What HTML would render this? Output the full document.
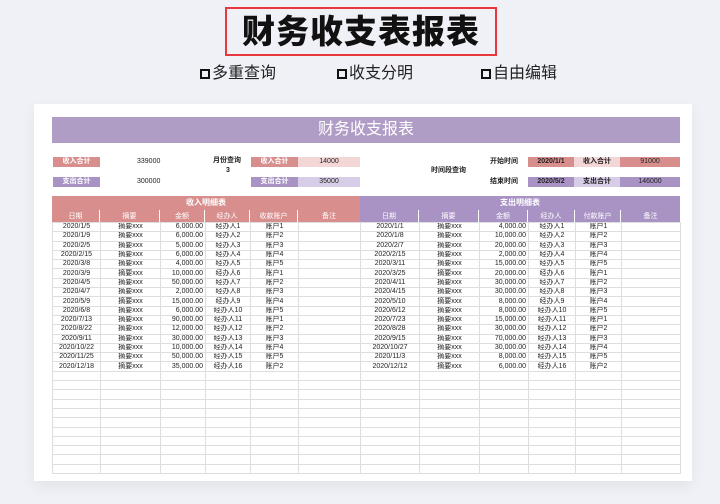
<!DOCTYPE html>
<html><head><meta charset="utf-8">
<style>
*{margin:0;padding:0;box-sizing:border-box}
body{width:720px;height:504px;background:#f0f1f6;position:relative;overflow:hidden;font-family:"Liberation Sans","Noto Sans CJK SC",sans-serif;color:#222}
.abs{position:absolute}
#redbox{left:225px;top:7px;width:272px;height:49px;border:2px solid #e8383d}
#title{left:225px;top:7px;width:272px;text-align:center;font-size:33px;font-weight:900;line-height:49px;letter-spacing:1px;color:#111}
.sub{top:64px;font-size:16px;line-height:20px;color:#222}
.sub i{display:inline-block;width:10px;height:10px;border:2px solid #111;margin-right:2px;vertical-align:-1px}
#card{left:34px;top:104px;width:658px;height:377px;background:#fff;box-shadow:0 6px 14px rgba(0,0,0,0.06)}
#bar{left:52px;top:117px;width:628px;height:26px;background:#b09dc6;color:#fff;font-size:16px;line-height:26px;text-align:center}
.lbl{height:10px;font-size:7px;line-height:10px;text-align:center;color:#fff;font-weight:bold}
.pk{background:#d98e8e}.pu{background:#a993c4}.lpk{background:#f3d6d6;color:#222;font-weight:normal}.lpu{background:#d8cde6;color:#222;font-weight:normal}
.t{font-size:7px;line-height:10px;color:#222}
.hdr{top:196px;height:14px;color:#fff;font-size:8px;font-weight:bold;text-align:center;line-height:14px}
.ch{top:210px;height:13px;display:flex}
.ch div{color:#fff;font-size:7px;line-height:13px;text-align:center;border-right:1px solid #fff}
table{position:absolute;left:52px;top:222px;width:628px;border-collapse:collapse;table-layout:fixed}
td{border:1px solid #dedede;height:9.3px;font-size:7px;line-height:8px;padding:0 2px;text-align:center;white-space:nowrap;overflow:hidden}
td.r{text-align:right}
</style></head><body>
<div class="abs" id="redbox"></div>
<div class="abs" id="title">财务收支表报表</div>
<div class="abs sub" style="left:200px"><i></i>多重查询</div>
<div class="abs sub" style="left:337px"><i></i>收支分明</div>
<div class="abs sub" style="left:481px"><i></i>自由编辑</div>
<div class="abs" id="card"></div>
<div class="abs" id="bar">财务收支报表</div>

<div class="abs lbl pk" style="left:53px;top:157px;width:47px">收入合计</div>
<div class="abs t" style="left:137px;top:157px">339000</div>
<div class="abs lbl pu" style="left:53px;top:177px;width:47px">支出合计</div>
<div class="abs t" style="left:137px;top:177px">300000</div>
<div class="abs t" style="left:213px;top:156px;font-weight:bold">月份查询</div>
<div class="abs t" style="left:226px;top:166px;font-weight:bold">3</div>
<div class="abs lbl pk" style="left:251px;top:157px;width:47px">收入合计</div>
<div class="abs lbl lpk" style="left:298px;top:157px;width:62px">14000</div>
<div class="abs lbl pu" style="left:251px;top:177px;width:47px">支出合计</div>
<div class="abs lbl lpu" style="left:298px;top:177px;width:62px">35000</div>
<div class="abs t" style="left:431px;top:166px;font-weight:bold">时间段查询</div>
<div class="abs t" style="left:490px;top:157px;font-weight:bold">开始时间</div>
<div class="abs t" style="left:490px;top:177px;font-weight:bold">结束时间</div>
<div class="abs lbl pk" style="left:528px;top:157px;width:46px;color:#222">2020/1/1</div>
<div class="abs lbl lpk" style="left:574px;top:157px;width:46px;font-weight:bold">收入合计</div>
<div class="abs lbl pk" style="left:620px;top:157px;width:60px;color:#222;font-weight:normal">91000</div>
<div class="abs lbl pu" style="left:528px;top:177px;width:46px;color:#222">2020/5/2</div>
<div class="abs lbl lpu" style="left:574px;top:177px;width:46px;font-weight:bold">支出合计</div>
<div class="abs lbl pu" style="left:620px;top:177px;width:60px;color:#222;font-weight:normal">146000</div>

<div class="abs hdr pk" style="left:52px;width:308px">收入明细表</div>
<div class="abs hdr pu" style="left:360px;width:320px">支出明细表</div>
<div class="abs ch pk" style="left:52px;width:308px">
<div style="width:48px">日期</div><div style="width:60px">摘要</div><div style="width:45px">金额</div><div style="width:45px">经办人</div><div style="width:48px">收款账户</div><div style="width:62px;border:0">备注</div></div>
<div class="abs ch pu" style="left:360px;width:320px">
<div style="width:59px">日期</div><div style="width:60px">摘要</div><div style="width:49px">金额</div><div style="width:47px">经办人</div><div style="width:46px">付款账户</div><div style="width:59px;border:0">备注</div></div>

<table>
<colgroup><col style="width:48px"><col style="width:60px"><col style="width:45px"><col style="width:45px"><col style="width:48px"><col style="width:62px"><col style="width:59px"><col style="width:60px"><col style="width:49px"><col style="width:47px"><col style="width:46px"><col style="width:59px"></colgroup>
<tr><td>2020/1/5</td><td>摘要xxx</td><td class="r">6,000.00</td><td>经办人1</td><td>账户1</td><td></td><td>2020/1/1</td><td>摘要xxx</td><td class="r">4,000.00</td><td>经办人1</td><td>账户1</td><td></td></tr>
<tr><td>2020/1/9</td><td>摘要xxx</td><td class="r">6,000.00</td><td>经办人2</td><td>账户2</td><td></td><td>2020/1/8</td><td>摘要xxx</td><td class="r">10,000.00</td><td>经办人2</td><td>账户2</td><td></td></tr>
<tr><td>2020/2/5</td><td>摘要xxx</td><td class="r">5,000.00</td><td>经办人3</td><td>账户3</td><td></td><td>2020/2/7</td><td>摘要xxx</td><td class="r">20,000.00</td><td>经办人3</td><td>账户3</td><td></td></tr>
<tr><td>2020/2/15</td><td>摘要xxx</td><td class="r">6,000.00</td><td>经办人4</td><td>账户4</td><td></td><td>2020/2/15</td><td>摘要xxx</td><td class="r">2,000.00</td><td>经办人4</td><td>账户4</td><td></td></tr>
<tr><td>2020/3/8</td><td>摘要xxx</td><td class="r">4,000.00</td><td>经办人5</td><td>账户5</td><td></td><td>2020/3/11</td><td>摘要xxx</td><td class="r">15,000.00</td><td>经办人5</td><td>账户5</td><td></td></tr>
<tr><td>2020/3/9</td><td>摘要xxx</td><td class="r">10,000.00</td><td>经办人6</td><td>账户1</td><td></td><td>2020/3/25</td><td>摘要xxx</td><td class="r">20,000.00</td><td>经办人6</td><td>账户1</td><td></td></tr>
<tr><td>2020/4/5</td><td>摘要xxx</td><td class="r">50,000.00</td><td>经办人7</td><td>账户2</td><td></td><td>2020/4/11</td><td>摘要xxx</td><td class="r">30,000.00</td><td>经办人7</td><td>账户2</td><td></td></tr>
<tr><td>2020/4/7</td><td>摘要xxx</td><td class="r">2,000.00</td><td>经办人8</td><td>账户3</td><td></td><td>2020/4/15</td><td>摘要xxx</td><td class="r">30,000.00</td><td>经办人8</td><td>账户3</td><td></td></tr>
<tr><td>2020/5/9</td><td>摘要xxx</td><td class="r">15,000.00</td><td>经办人9</td><td>账户4</td><td></td><td>2020/5/10</td><td>摘要xxx</td><td class="r">8,000.00</td><td>经办人9</td><td>账户4</td><td></td></tr>
<tr><td>2020/6/8</td><td>摘要xxx</td><td class="r">6,000.00</td><td>经办人10</td><td>账户5</td><td></td><td>2020/6/12</td><td>摘要xxx</td><td class="r">8,000.00</td><td>经办人10</td><td>账户5</td><td></td></tr>
<tr><td>2020/7/13</td><td>摘要xxx</td><td class="r">90,000.00</td><td>经办人11</td><td>账户1</td><td></td><td>2020/7/23</td><td>摘要xxx</td><td class="r">15,000.00</td><td>经办人11</td><td>账户1</td><td></td></tr>
<tr><td>2020/8/22</td><td>摘要xxx</td><td class="r">12,000.00</td><td>经办人12</td><td>账户2</td><td></td><td>2020/8/28</td><td>摘要xxx</td><td class="r">30,000.00</td><td>经办人12</td><td>账户2</td><td></td></tr>
<tr><td>2020/9/11</td><td>摘要xxx</td><td class="r">30,000.00</td><td>经办人13</td><td>账户3</td><td></td><td>2020/9/15</td><td>摘要xxx</td><td class="r">70,000.00</td><td>经办人13</td><td>账户3</td><td></td></tr>
<tr><td>2020/10/22</td><td>摘要xxx</td><td class="r">10,000.00</td><td>经办人14</td><td>账户4</td><td></td><td>2020/10/27</td><td>摘要xxx</td><td class="r">30,000.00</td><td>经办人14</td><td>账户4</td><td></td></tr>
<tr><td>2020/11/25</td><td>摘要xxx</td><td class="r">50,000.00</td><td>经办人15</td><td>账户5</td><td></td><td>2020/11/3</td><td>摘要xxx</td><td class="r">8,000.00</td><td>经办人15</td><td>账户5</td><td></td></tr>
<tr><td>2020/12/18</td><td>摘要xxx</td><td class="r">35,000.00</td><td>经办人16</td><td>账户2</td><td></td><td>2020/12/12</td><td>摘要xxx</td><td class="r">6,000.00</td><td>经办人16</td><td>账户2</td><td></td></tr>
<tr><td></td><td></td><td></td><td></td><td></td><td></td><td></td><td></td><td></td><td></td><td></td><td></td></tr>
<tr><td></td><td></td><td></td><td></td><td></td><td></td><td></td><td></td><td></td><td></td><td></td><td></td></tr>
<tr><td></td><td></td><td></td><td></td><td></td><td></td><td></td><td></td><td></td><td></td><td></td><td></td></tr>
<tr><td></td><td></td><td></td><td></td><td></td><td></td><td></td><td></td><td></td><td></td><td></td><td></td></tr>
<tr><td></td><td></td><td></td><td></td><td></td><td></td><td></td><td></td><td></td><td></td><td></td><td></td></tr>
<tr><td></td><td></td><td></td><td></td><td></td><td></td><td></td><td></td><td></td><td></td><td></td><td></td></tr>
<tr><td></td><td></td><td></td><td></td><td></td><td></td><td></td><td></td><td></td><td></td><td></td><td></td></tr>
<tr><td></td><td></td><td></td><td></td><td></td><td></td><td></td><td></td><td></td><td></td><td></td><td></td></tr>
<tr><td></td><td></td><td></td><td></td><td></td><td></td><td></td><td></td><td></td><td></td><td></td><td></td></tr>
<tr><td></td><td></td><td></td><td></td><td></td><td></td><td></td><td></td><td></td><td></td><td></td><td></td></tr>
<tr><td></td><td></td><td></td><td></td><td></td><td></td><td></td><td></td><td></td><td></td><td></td><td></td></tr>
</table>
</body></html>
